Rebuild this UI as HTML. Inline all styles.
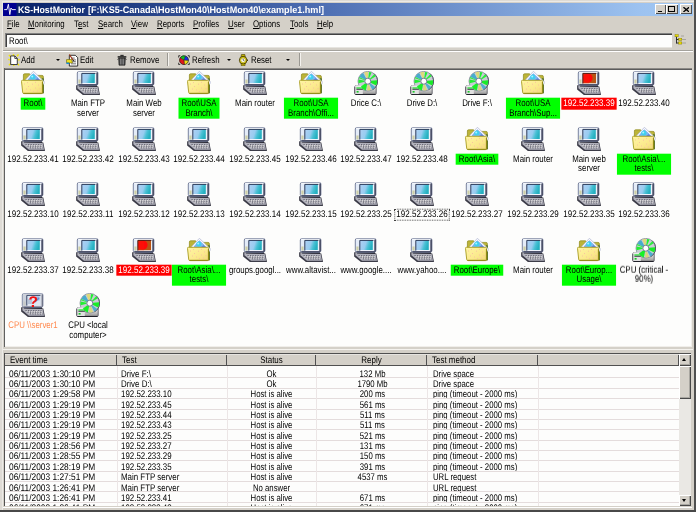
<!DOCTYPE html>
<html><head><meta charset="utf-8"><title>KS-HostMonitor</title>
<style>
html,body{margin:0;padding:0;}
body{width:696px;height:512px;overflow:hidden;background:#d4d0c8;font-family:"Liberation Sans",sans-serif;font-size:9.6px;color:#000;position:relative;text-rendering:geometricPrecision;}
.abs{position:absolute;}
#root{position:absolute;left:0;top:0;width:696px;height:512px;overflow:hidden;will-change:transform;}
#frameR{left:694px;top:0;width:2px;height:512px;background:#505050;}
#frameB{left:0;top:509.5px;width:696px;height:3px;background:#484848;}
#title{left:3px;top:3px;width:690px;height:13px;background:linear-gradient(90deg,#0a246a 0%,#0a246a 3%,#4f70b4 47%,#9cc2f0 92%,#a2c8f2 100%);}
.ttext{left:17.8px;top:4.7px;color:#fff;font-weight:bold;font-size:9.5px;line-height:12px;white-space:pre;transform:scaleX(0.944);transform-origin:0 50%;}
.wb{position:absolute;top:4.3px;width:11px;height:10.2px;background:#d4d0c8;box-shadow:inset 1px 1px 0 #fff,inset -1px -1px 0 #505050;}
.mi{position:absolute;top:19.3px;line-height:11px;white-space:nowrap;transform:scaleX(0.82);transform-origin:0 50%;}
#path{left:5px;top:33px;width:667px;height:14px;background:#fdfdfc;box-shadow:inset 1px 1px 0 #808080,inset 2px 2px 0 #404040,0 1px 0 #e6e4df;}
#ptext{left:9px;top:36px;line-height:11px;transform:scaleX(0.82);transform-origin:0 50%;}
#tbtn{left:673px;top:33px;width:18px;height:15px;background:#d4d0c8;}
#tbline1{left:3px;top:49.5px;width:690px;height:1px;background:#a4a29c;}
#tbline2{left:3px;top:50.5px;width:690px;height:1px;background:#fff;}
.tt{position:absolute;top:55px;line-height:11px;white-space:nowrap;transform:scaleX(0.82);transform-origin:0 50%;}
.sep{position:absolute;top:53px;width:1px;height:13px;background:#9a9892;box-shadow:1px 0 0 #f4f2ee;}
.dd{position:absolute;top:59.3px;width:0;height:0;border-left:2.1px solid transparent;border-right:2.1px solid transparent;border-top:2.6px solid #000;}
#icons{left:4px;top:68px;width:688px;height:278.5px;background:#fdfdfc;box-shadow:inset 1px 0 0 #606060,inset 0 1px 0 #8c8a86,inset 0 2px 0 #5c5c5c,inset -1px -1px 0 #f0eeea;}
.ic{position:absolute;}
.lw{position:absolute;width:100px;text-align:center;line-height:9.6px;white-space:nowrap;transform:translateY(-0.3px) scaleX(0.82);}
.lw.ip{transform:translateY(-0.3px) scaleX(0.838);}
.lw.ip .lb{padding-left:2px;padding-right:2px;}
.lb{display:inline-block;padding:1.25px 3.4px 0.75px 3.4px;}
.lb.e{min-width:58.5px;}
.lb.g{background:#00ff00;}
.lb.r{background:#ff0000;color:#fff;}
.lb.o{color:#ff8a50;}
.lb.f{outline:1px dotted #404040;outline-offset:-1px;padding-left:2.4px;padding-right:2.4px;}
#split{left:3px;top:348.5px;width:690px;height:1px;background:#f4f2ee;}
#log{left:4px;top:353px;width:687px;height:154px;background:#fdfdfc;box-shadow:inset 1px 1px 0 #505050;}
.hd{position:absolute;top:354px;height:12.4px;background:#d4d0c8;box-shadow:inset 0 1px 0 #e6e4e0,inset -1px -1px 0 #505050;line-height:12px;}
.hd span{position:absolute;top:1.2px;white-space:nowrap;transform:scaleX(0.83);transform-origin:0 50%;}
.hd span.ctr{transform-origin:50% 50%;}
.lr{position:absolute;left:5px;width:674px;height:10.35px;line-height:10.35px;white-space:nowrap;border-bottom:0;}
.lr::after{content:"";position:absolute;left:0;right:0;bottom:0;height:1px;background:#e4dcdc;}
.lr span{position:absolute;top:1.5px;transform:scaleX(0.81);transform-origin:0 50%;}
.lr .c1{left:3.7px;transform:scaleX(0.87);} .lr .c2{left:116px;transform:scaleX(0.825);} .lr .c3{left:222px;width:89px;text-align:center;transform-origin:50% 50%;} .lr .c4{left:312px;width:111px;text-align:center;transform-origin:50% 50%;} .c5{left:428px;}
.vl{position:absolute;top:366px;width:1px;height:141px;background:#ece6e6;}
#sb{left:679px;top:354px;width:12px;height:152px;background:#eae8e4;}
.sbb{position:absolute;left:679px;width:12px;background:#d4d0c8;box-shadow:inset 1px 1px 0 #fff,inset -1px -1px 0 #484848,inset -2px -2px 0 #a8a6a0;}
.arr{position:absolute;width:0;height:0;border-left:2.6px solid transparent;border-right:2.6px solid transparent;}
</style></head><body>

<svg width="0" height="0" style="position:absolute">
<defs>
<linearGradient id="gScr" x1="0" y1="0" x2="1" y2="0.25">
 <stop offset="0" stop-color="#b0d0f4"/><stop offset="0.5" stop-color="#98ccf0"/><stop offset="0.75" stop-color="#48c0d4"/><stop offset="1" stop-color="#26b0c0"/>
</linearGradient>
<linearGradient id="gRed" x1="0" y1="0" x2="1" y2="0.4">
 <stop offset="0" stop-color="#ff1808"/><stop offset="0.5" stop-color="#f02808"/><stop offset="1" stop-color="#b86028"/>
</linearGradient>
<linearGradient id="gFold" x1="0" y1="0" x2="1" y2="1">
 <stop offset="0" stop-color="#fff6a4"/><stop offset="0.6" stop-color="#fbe98c"/><stop offset="1" stop-color="#f0d878"/>
</linearGradient>
<linearGradient id="gDrv" x1="0" y1="0" x2="0" y2="1">
 <stop offset="0" stop-color="#f0f0f0"/><stop offset="0.5" stop-color="#c8c8c8"/><stop offset="1" stop-color="#909090"/>
</linearGradient>
<symbol id="pc" viewBox="0 0 24 24">
 <!-- base shadow & unit -->
 <path d="M0.1 14.2 L22.3 15.4 L24 23.9 L6.9 23.9 L0.1 18.6 Z" fill="#3c3c48"/>
 <path d="M1.4 15 L21.6 15.8 L23 22.7 L8 22.7 L1.4 17.2 Z" fill="#b2b2bc"/>
 <path d="M4.5 17.5 L20.6 17.8 M6.6 19.2 L21.2 19.4 M8.8 20.9 L21.8 21.1" stroke="#5e5e6a" stroke-width="1" stroke-dasharray="1.3 1.2"/>
 <path d="M5.4 18.3 L20.8 18.6 M7.6 20 L21.4 20.2" stroke="#f0eee8" stroke-width="0.8" stroke-dasharray="1.2 1.2"/>
 <!-- neck -->
 <path d="M3.6 13.6 L20.6 13.6 L21.4 16 L2.8 15.6Z" fill="#2c2c38"/>
 <!-- monitor casing -->
 <path d="M3 0.5 L20.4 0.5 Q21.9 0.5 21.9 2 L21.9 12.6 Q21.9 14.2 20.4 14.2 L3 14.2 Q1.3 14.2 1.3 12.6 L1.3 2 Q1.3 0.5 3 0.5Z" fill="#e4ecf8" stroke="#5a6486" stroke-width="0.8"/>
 <path d="M2 1.2 L20.8 1.2" stroke="#ffffff" stroke-width="0.9"/>
 <path d="M21.1 1.6 L21.1 13.6" stroke="#3c4058" stroke-width="1.5"/><path d="M2.4 13.5 L21 13.5" stroke="#50546c" stroke-width="1.1"/>
 <path d="M2.4 8.5 L2.4 12.5 L4.6 12.5 L4.6 8.5Z" fill="#c8c890" opacity="0.8"/>

 <rect x="5.8" y="2.2" width="13.8" height="10.6" fill="#f4f8ff"/>
 <rect x="6" y="2.4" width="12.8" height="9.6" fill="url(#gScr)"/>
 <path d="M5.8 12.6 L5.8 2.4 L19.4 2.4" stroke="#283858" stroke-width="1" fill="none"/>
</symbol><symbol id="pcred" viewBox="0 0 24 24">
 <!-- base shadow & unit -->
 <path d="M0.1 14.2 L22.3 15.4 L24 23.9 L6.9 23.9 L0.1 18.6 Z" fill="#3c3c48"/>
 <path d="M1.4 15 L21.6 15.8 L23 22.7 L8 22.7 L1.4 17.2 Z" fill="#b2b2bc"/>
 <path d="M4.5 17.5 L20.6 17.8 M6.6 19.2 L21.2 19.4 M8.8 20.9 L21.8 21.1" stroke="#5e5e6a" stroke-width="1" stroke-dasharray="1.3 1.2"/>
 <path d="M5.4 18.3 L20.8 18.6 M7.6 20 L21.4 20.2" stroke="#f0eee8" stroke-width="0.8" stroke-dasharray="1.2 1.2"/>
 <!-- neck -->
 <path d="M3.6 13.6 L20.6 13.6 L21.4 16 L2.8 15.6Z" fill="#2c2c38"/>
 <!-- monitor casing -->
 <path d="M3 0.5 L20.4 0.5 Q21.9 0.5 21.9 2 L21.9 12.6 Q21.9 14.2 20.4 14.2 L3 14.2 Q1.3 14.2 1.3 12.6 L1.3 2 Q1.3 0.5 3 0.5Z" fill="#e4ecf8" stroke="#5a6486" stroke-width="0.8"/>
 <path d="M2 1.2 L20.8 1.2" stroke="#ffffff" stroke-width="0.9"/>
 <path d="M21.1 1.6 L21.1 13.6" stroke="#3c4058" stroke-width="1.5"/><path d="M2.4 13.5 L21 13.5" stroke="#50546c" stroke-width="1.1"/>
 <path d="M2.4 8.5 L2.4 12.5 L4.6 12.5 L4.6 8.5Z" fill="#c8c890" opacity="0.8"/>

 <rect x="5.8" y="2.2" width="13.8" height="10.6" fill="#f4ece8"/>
 <rect x="6" y="2.4" width="13" height="9.8" fill="#b85414"/><ellipse cx="10.8" cy="7" rx="4.8" ry="4.5" fill="#ff0808"/><rect x="6" y="2.4" width="6" height="9.8" fill="#fa1408" opacity="0.6"/>
 <path d="M5.8 12.6 L5.8 2.4 L19.4 2.4" stroke="#501810" stroke-width="1" fill="none"/>
</symbol><symbol id="pcq" viewBox="0 0 24 24">
 <!-- base shadow & unit -->
 <path d="M0.1 14.2 L22.3 15.4 L24 23.9 L6.9 23.9 L0.1 18.6 Z" fill="#3c3c48"/>
 <path d="M1.4 15 L21.6 15.8 L23 22.7 L8 22.7 L1.4 17.2 Z" fill="#b2b2bc"/>
 <path d="M4.5 17.5 L20.6 17.8 M6.6 19.2 L21.2 19.4 M8.8 20.9 L21.8 21.1" stroke="#5e5e6a" stroke-width="1" stroke-dasharray="1.3 1.2"/>
 <path d="M5.4 18.3 L20.8 18.6 M7.6 20 L21.4 20.2" stroke="#f0eee8" stroke-width="0.8" stroke-dasharray="1.2 1.2"/>
 <!-- neck -->
 <path d="M3.6 13.6 L20.6 13.6 L21.4 16 L2.8 15.6Z" fill="#2c2c38"/>
 <!-- monitor casing -->
 <path d="M3 0.5 L20.4 0.5 Q21.9 0.5 21.9 2 L21.9 12.6 Q21.9 14.2 20.4 14.2 L3 14.2 Q1.3 14.2 1.3 12.6 L1.3 2 Q1.3 0.5 3 0.5Z" fill="#e4ecf8" stroke="#5a6486" stroke-width="0.8"/>
 <path d="M2 1.2 L20.8 1.2" stroke="#ffffff" stroke-width="0.9"/>
 <path d="M21.1 1.6 L21.1 13.6" stroke="#3c4058" stroke-width="1.5"/><path d="M2.4 13.5 L21 13.5" stroke="#50546c" stroke-width="1.1"/>
 <path d="M2.4 8.5 L2.4 12.5 L4.6 12.5 L4.6 8.5Z" fill="#c8c890" opacity="0.8"/>

 <rect x="1.8" y="1" width="19.6" height="12.8" fill="#c4c8d2" opacity="0.75"/>
 <rect x="5.8" y="2.2" width="13.8" height="10.6" fill="#dfe6f2"/>
 <path d="M5.8 12.6 L5.8 2.4 L19.4 2.4" stroke="#384868" stroke-width="1" fill="none"/>
 <rect x="7" y="6" width="4" height="5" fill="#b8c4d8"/><rect x="14.6" y="3.4" width="4" height="4" fill="#9cb4dc"/><path d="M14 9 L18 5" stroke="#6090d0" stroke-width="1.2"/>
 <text x="12.2" y="13.6" font-family="Liberation Sans" font-weight="bold" font-size="15.5" fill="#f01010" text-anchor="middle">?</text>
</symbol>
<symbol id="fold" viewBox="0 0 24 24">
 <!-- back of folder -->
 <path d="M2.4 4 Q2.4 2.8 3.6 2.8 L8.6 2.8 L10 4.4 L21 4.4 Q22.4 4.4 22.4 5.8 L22.4 22 L2.4 22Z" fill="#bcb438" stroke="#8c8818" stroke-width="0.7"/>
 <path d="M21.2 7 L22.8 7.4 L22.8 22.2 L21.2 22.6Z" fill="#4c6c28"/>
 <!-- photo -->
 <path d="M12.4 0.3 L24 11.4 L18.5 17.5 L4.4 8.8Z" fill="#f8f8ff" stroke="#a0a8c8" stroke-width="0.6"/>
 <path d="M12.3 2.6 L21.6 11.3 L17.5 15.6 L7 8.4Z" fill="#5c7ce0"/>
 <path d="M12.3 2.6 L17 7 L11 11.2 L7 8.4Z" fill="#78b8f0"/>
 <circle cx="11.8" cy="6" r="2.5" fill="#40d0f0"/>
 <circle cx="11.2" cy="5.4" r="1" fill="#a8f0ff"/>
 <!-- front of folder -->
 <path d="M1.4 9.3 L20.4 9.3 Q21.6 9.3 21.6 10.5 L21.6 21.4 Q21.6 22.6 20.4 22.6 L3 22.6 Q1.8 22.6 1.7 21.4 L0.5 10.4 Q0.4 9.3 1.4 9.3Z" fill="url(#gFold)" stroke="#a89c20" stroke-width="0.9"/>
 <path d="M2.6 22.3 L20.6 22.3 Q21.4 22.3 21.4 21.4 L21.4 11" stroke="#8c8410" stroke-width="0.9" fill="none"/>
 <path d="M3 13 h1 M7 15.5 h1 M11 13.2 h1 M14 17 h1 M9 19 h1 M17 14 h1 M5 18 h1 M16 20 h1 M12 20.6 h1 M18.6 17.6 h1 M6 11.6 h1 M14 11.4 h1" stroke="#f8c0a0" stroke-width="0.9"/>
</symbol>

<symbol id="cd" viewBox="0 0 24 24">
 <path d="M2 14.8 L21 14.8 Q22.2 14.8 22.2 16 L22.2 22.4 Q22.2 23.6 21 23.6 L2 23.6 Q0.7 23.6 0.7 22.4 L0.7 16 Q0.7 14.8 2 14.8Z" fill="url(#gDrv)" stroke="#50505a" stroke-width="0.8"/>
 <path d="M1.6 23.5 L21.4 23.5" stroke="#202028" stroke-width="1.2"/>
 <circle cx="13.8" cy="10.2" r="9.8" fill="#c8ccd4" stroke="#808898" stroke-width="0.8"/>
 <path d="M20.10 2.69 A9.8 9.8 0 0 1 18.70 18.69" fill="none" stroke="#484c5c" stroke-width="0.9"/>
 <path d="M10.97 8.70 L5.50 5.79 A9.4 9.4 0 0 1 9.10 2.06 L12.20 7.43Z" fill="#38a8cc" opacity="0.9"/><path d="M12.60 7.23 L10.28 1.48 A9.4 9.4 0 0 1 14.13 0.81 L13.91 7.00Z" fill="#e0dc70" opacity="0.9"/><path d="M14.25 7.03 L15.11 0.89 A9.4 9.4 0 0 1 17.62 1.61 L15.10 7.28Z" fill="#20f030" opacity="1"/><path d="M15.94 7.82 L20.09 3.21 A9.4 9.4 0 0 1 21.77 5.22 L16.51 8.50Z" fill="#28f038" opacity="1"/><path d="M16.98 9.87 L23.15 9.22 A9.4 9.4 0 0 1 22.10 14.61 L16.63 11.70Z" fill="#18ec28" opacity="1"/><path d="M16.32 12.17 L21.21 15.99 A9.4 9.4 0 0 1 18.21 18.50 L15.30 13.03Z" fill="#38a8cc" opacity="0.85"/><path d="M14.89 13.21 L17.01 19.03 A9.4 9.4 0 0 1 13.14 19.58 L13.58 13.39Z" fill="#dcd870" opacity="0.9"/><path d="M13.13 13.33 L11.85 19.39 A9.4 9.4 0 0 1 6.39 15.99 L11.28 12.17Z" fill="#18f028" opacity="1"/><path d="M10.67 10.87 L4.61 12.15 A9.4 9.4 0 0 1 4.54 8.57 L10.65 9.64Z" fill="#20f030" opacity="1"/><path d="M10.76 9.21 L4.86 7.30 A9.4 9.4 0 0 1 5.35 6.08 L10.92 8.80Z" fill="#28f038" opacity="1"/>
 <circle cx="13.8" cy="10.2" r="3" fill="#ffffff" stroke="#687088" stroke-width="0.9"/>
 <path d="M2 14.8 L6.6 14.8 L8.8 19 L8.8 23 L1.2 23 L0.9 16 Q0.9 14.8 2 14.8Z" fill="#e0e0e0"/>
 <path d="M2 15 L6.6 15" stroke="#fafafa" stroke-width="0.8"/>
 <path d="M2.4 17 L7.8 17" stroke="#18e828" stroke-width="1.2"/>
 <path d="M2.4 18.3 L8.8 18.3" stroke="#404048" stroke-width="1"/>
 <rect x="2.6" y="20" width="2" height="1.6" fill="#18c828"/>
 <path d="M0.8 16 L0.8 22.4" stroke="#50505a" stroke-width="0.8"/>
</symbol>

<!-- toolbar icons -->
<symbol id="tAdd" viewBox="0 0 14 14">
 <path d="M1 1 L3.2 3.2 M6 0.2 L6.2 2 M11.8 0.6 L10 2.6 M13 6.5 L11 6.6 M12.4 12.6 L10.6 11 M1 12.6 L2.8 11 M0.2 6 L2 6.4 M6.4 13.8 L6.4 12.4" stroke="#f4e800" stroke-width="1.6"/>
 <path d="M3 2.2 L7.6 2.2 L10.4 5 L10.4 11.8 L3 11.8Z" fill="#ffffff" stroke="#101010" stroke-width="0.9"/>
 <path d="M7.6 2.2 L7.6 5 L10.4 5" fill="none" stroke="#101010" stroke-width="0.8"/>
</symbol>
<symbol id="tEdit" viewBox="0 0 14 14">
 <path d="M3.6 1.4 L10 1.4 L12.6 4 L12.6 13 L3.6 13Z" fill="#ffffff" stroke="#101010" stroke-width="0.9"/>
 <path d="M5.4 4.4 h4 M5.4 6.4 h5.4 M5.4 8.4 h5.4 M5.4 10.6 h5.4" stroke="#404040" stroke-width="0.8"/>
 <path d="M0.6 6 L6 6 L7 9.6 L0.6 9.6Z" fill="#f0e020" stroke="#605800" stroke-width="0.6"/>
 <path d="M0.4 9.2 h3 v1.6 h-3z" fill="#1890d8"/>
 <path d="M3.6 0.6 L7.6 6.4" stroke="#a03010" stroke-width="1.2"/>
 <path d="M7.6 6.4 L8.6 8" stroke="#101010" stroke-width="1"/>
</symbol>
<symbol id="tRem" viewBox="0 0 12 14">
 <path d="M4 0.8 h4 v1.6 h-4z" fill="#303030"/>
 <path d="M0.8 2.4 h10.4 v1.8 h-10.4z" fill="#202020"/>
 <path d="M2 4.6 h8 l-0.4 8.6 h-7.2z" fill="#484848" stroke="#101010" stroke-width="0.7"/>
 <path d="M4.2 5.4 v7 M6 5.4 v7 M7.8 5.4 v7" stroke="#a0a0a0" stroke-width="0.7"/>
 <path d="M0.4 6.4 L1.8 5.6 M11.6 6.4 L10.2 5.6" stroke="#202020" stroke-width="0.8"/>
</symbol>
<symbol id="tRef" viewBox="0 0 14 12">
 <path d="M2.6 0.8 L0.8 0.8 L0.8 3 M0.8 9 L0.8 11.2 L2.6 11.2 M11.4 0.8 L13.2 0.8 L13.2 3 M13.2 9 L13.2 11.2 L11.4 11.2" fill="none" stroke="#101010" stroke-width="0.9"/>
 <path d="M7 6 L2.6 3 A5.2 5.2 0 0 1 8.6 1.05Z" fill="#10c020"/>
 <path d="M7 6 L8.6 1.05 A5.2 5.2 0 0 1 12.2 6.4Z" fill="#1830e0"/>
 <path d="M7 6 L12.2 6.4 A5.2 5.2 0 0 1 7.6 11.2Z" fill="#f0e010"/>
 <path d="M7 6 L7.6 11.2 A5.2 5.2 0 0 1 2.6 3Z" fill="#e01818"/>
 <path d="M7 6 L2.6 3 M7 6 L8.6 1.05 M7 6 L12.2 6.4 M7 6 L7.6 11.2" stroke="#181818" stroke-width="0.6"/><circle cx="7" cy="6" r="5.2" fill="none" stroke="#202020" stroke-width="0.8"/>
</symbol>
<symbol id="tRes" viewBox="0 0 12 14">
 <path d="M4 0.4 h4 l0.4 3 h-4.8z M3.6 10.6 h4.8 l-0.4 3 h-4z" fill="#c8b800" stroke="#403800" stroke-width="0.7"/>
 <circle cx="6" cy="7" r="4.4" fill="#f0e010" stroke="#282000" stroke-width="0.9"/>
 <circle cx="6" cy="7" r="2.7" fill="#fffff0" stroke="#807000" stroke-width="0.5"/>
 <path d="M6 5.2 L6 7 L7.4 7.6" stroke="#101010" stroke-width="0.7" fill="none"/>
 <path d="M10.4 6.2 h1.2 v1.6 h-1.2z" fill="#403800"/>
</symbol>
</defs></svg>

<div id="root">
<div id="title" class="abs"></div>
<svg class="abs" style="left:3px;top:3px" width="14" height="13" viewBox="0 0 14 13"><rect x="0" y="0" width="13.5" height="13" fill="#000090"/><path d="M1.2 6.6 L4 6.6 L5.4 1.2 L6.8 11.6 L8 5 L9 6.6 L12.8 6.6" fill="none" stroke="#fff" stroke-width="0.9"/></svg>
<div class="abs ttext" style="left:17.6px;transform:scaleX(0.925)">KS-HostMonitor</div><div class="abs ttext" style="left:88px;transform:scaleX(0.955)">[F:\KS5-Canada\HostMon40\HostMon40\example1.hml]</div>
<div class="wb" style="left:654.5px"><div class="abs" style="left:3px;top:6.5px;width:4.7px;height:1.6px;background:#000"></div></div>
<div class="wb" style="left:666px;width:11.6px"><div class="abs" style="left:2.3px;top:1.8px;width:6.8px;height:6.1px;border:1px solid #000;border-top-width:1.8px;box-sizing:border-box"></div></div>
<div class="wb" style="left:679.8px;width:11.8px"><svg class="abs" style="left:2.8px;top:2.5px" width="6.6" height="5.2" viewBox="0 0 6.6 5.2"><path d="M0.4 0.2 L6.2 5 M6.2 0.2 L0.4 5" stroke="#000" stroke-width="1.35"/></svg></div>
<span class="mi" style="left:6.9px"><u>F</u>ile</span><span class="mi" style="left:28px"><u>M</u>onitoring</span><span class="mi" style="left:74px">T<u>e</u>st</span><span class="mi" style="left:98px"><u>S</u>earch</span><span class="mi" style="left:131px"><u>V</u>iew</span><span class="mi" style="left:157px"><u>R</u>eports</span><span class="mi" style="left:193px"><u>P</u>rofiles</span><span class="mi" style="left:228px"><u>U</u>ser</span><span class="mi" style="left:253px"><u>O</u>ptions</span><span class="mi" style="left:290px"><u>T</u>ools</span><span class="mi" style="left:317px"><u>H</u>elp</span>
<div id="path" class="abs"></div><div id="ptext" class="abs">Root\</div>
<div id="tbtn" class="abs"></div>
<svg class="abs" style="left:674px;top:34.4px" width="13" height="12" viewBox="0 0 13 12"><path d="M2.5 2 L2.5 9.5 M2.5 5.5 L5 5.5 M2.5 9 L5 9" stroke="#202020" stroke-width="0.9" fill="none"/><path d="M7.5 2 L10 2 M8.5 5.5 L11.5 5.5 M8.5 9 L11.5 9" stroke="#606060" stroke-width="0.8" stroke-dasharray="1 1"/><rect x="1" y="0.6" width="3.2" height="2.2" fill="#e8e000" stroke="#807000" stroke-width="0.4"/><rect x="4.6" y="4.3" width="3.2" height="2.2" fill="#e8e000" stroke="#807000" stroke-width="0.4"/><rect x="4.6" y="7.9" width="3.2" height="2.2" fill="#e8e000" stroke="#807000" stroke-width="0.4"/></svg>
<div id="tbline1" class="abs"></div><div id="tbline2" class="abs"></div>
<!-- toolbar -->
<svg class="abs" style="left:7.5px;top:53.5px" width="12.5" height="12.5"><use href="#tAdd"/></svg>
<span class="tt" style="left:21px">Add</span><div class="dd" style="left:56px"></div>
<svg class="abs" style="left:66px;top:53.5px" width="13" height="13"><use href="#tEdit"/></svg>
<span class="tt" style="left:80px">Edit</span>
<svg class="abs" style="left:117px;top:53.7px" width="10" height="12"><use href="#tRem"/></svg>
<span class="tt" style="left:130px">Remove</span>
<div class="sep" style="left:167px"></div>
<svg class="abs" style="left:177.5px;top:54.8px" width="12" height="10.3"><use href="#tRef"/></svg>
<span class="tt" style="left:191.5px">Refresh</span><div class="dd" style="left:227px"></div>
<svg class="abs" style="left:238px;top:53.6px" width="10.3" height="12.4"><use href="#tRes"/></svg>
<span class="tt" style="left:250.5px">Reset</span><div class="dd" style="left:286px"></div>
<div class="sep" style="left:298.5px"></div>
<!-- icon pane -->
<div id="icons" class="abs"></div>
<svg class="ic" style="left:20.5px;top:71.0px" width="24" height="24"><use href="#fold"/></svg><div class="lw" style="left:-17.5px;top:98.0px"><span class="lb g">Root\</span></div><svg class="ic" style="left:76.1px;top:71.0px" width="24" height="24"><use href="#pc"/></svg><div class="lw" style="left:38.1px;top:98.0px"><span class="lb">Main FTP<br>server</span></div><svg class="ic" style="left:131.7px;top:71.0px" width="24" height="24"><use href="#pc"/></svg><div class="lw" style="left:93.7px;top:98.0px"><span class="lb">Main Web<br>server</span></div><svg class="ic" style="left:187.3px;top:71.0px" width="24" height="24"><use href="#fold"/></svg><div class="lw" style="left:149.3px;top:98.0px"><span class="lb g">Root\USA<br>Branch\</span></div><svg class="ic" style="left:242.9px;top:71.0px" width="24" height="24"><use href="#pc"/></svg><div class="lw" style="left:204.9px;top:98.0px"><span class="lb">Main router</span></div><svg class="ic" style="left:298.6px;top:71.0px" width="24" height="24"><use href="#fold"/></svg><div class="lw" style="left:260.6px;top:98.0px"><span class="lb g e">Root\USA<br>Branch\Offi...</span></div><svg class="ic" style="left:354.2px;top:71.0px" width="24" height="24"><use href="#cd"/></svg><div class="lw" style="left:316.2px;top:98.0px"><span class="lb">Drice C:\</span></div><svg class="ic" style="left:409.8px;top:71.0px" width="24" height="24"><use href="#cd"/></svg><div class="lw" style="left:371.8px;top:98.0px"><span class="lb">Drive D:\</span></div><svg class="ic" style="left:465.4px;top:71.0px" width="24" height="24"><use href="#cd"/></svg><div class="lw" style="left:427.4px;top:98.0px"><span class="lb">Drive F:\</span></div><svg class="ic" style="left:521.0px;top:71.0px" width="24" height="24"><use href="#fold"/></svg><div class="lw" style="left:483.0px;top:98.0px"><span class="lb g e">Root\USA<br>Branch\Sup...</span></div><svg class="ic" style="left:576.6px;top:71.0px" width="24" height="24"><use href="#pcred"/></svg><div class="lw ip" style="left:538.6px;top:98.0px"><span class="lb r">192.52.233.39</span></div><svg class="ic" style="left:632.2px;top:71.0px" width="24" height="24"><use href="#pc"/></svg><div class="lw ip" style="left:594.2px;top:98.0px"><span class="lb">192.52.233.40</span></div><svg class="ic" style="left:20.5px;top:126.5px" width="24" height="24"><use href="#pc"/></svg><div class="lw ip" style="left:-17.5px;top:153.5px"><span class="lb">192.52.233.41</span></div><svg class="ic" style="left:76.1px;top:126.5px" width="24" height="24"><use href="#pc"/></svg><div class="lw ip" style="left:38.1px;top:153.5px"><span class="lb">192.52.233.42</span></div><svg class="ic" style="left:131.7px;top:126.5px" width="24" height="24"><use href="#pc"/></svg><div class="lw ip" style="left:93.7px;top:153.5px"><span class="lb">192.52.233.43</span></div><svg class="ic" style="left:187.3px;top:126.5px" width="24" height="24"><use href="#pc"/></svg><div class="lw ip" style="left:149.3px;top:153.5px"><span class="lb">192.52.233.44</span></div><svg class="ic" style="left:242.9px;top:126.5px" width="24" height="24"><use href="#pc"/></svg><div class="lw ip" style="left:204.9px;top:153.5px"><span class="lb">192.52.233.45</span></div><svg class="ic" style="left:298.6px;top:126.5px" width="24" height="24"><use href="#pc"/></svg><div class="lw ip" style="left:260.6px;top:153.5px"><span class="lb">192.52.233.46</span></div><svg class="ic" style="left:354.2px;top:126.5px" width="24" height="24"><use href="#pc"/></svg><div class="lw ip" style="left:316.2px;top:153.5px"><span class="lb">192.52.233.47</span></div><svg class="ic" style="left:409.8px;top:126.5px" width="24" height="24"><use href="#pc"/></svg><div class="lw ip" style="left:371.8px;top:153.5px"><span class="lb">192.52.233.48</span></div><svg class="ic" style="left:465.4px;top:126.5px" width="24" height="24"><use href="#fold"/></svg><div class="lw" style="left:427.4px;top:153.5px"><span class="lb g">Root\Asia\</span></div><svg class="ic" style="left:521.0px;top:126.5px" width="24" height="24"><use href="#pc"/></svg><div class="lw" style="left:483.0px;top:153.5px"><span class="lb">Main router</span></div><svg class="ic" style="left:576.6px;top:126.5px" width="24" height="24"><use href="#pc"/></svg><div class="lw" style="left:538.6px;top:153.5px"><span class="lb">Main web<br>server</span></div><svg class="ic" style="left:632.2px;top:126.5px" width="24" height="24"><use href="#fold"/></svg><div class="lw" style="left:594.2px;top:153.5px"><span class="lb g e">Root\Asia\...<br>tests\</span></div><svg class="ic" style="left:20.5px;top:182.0px" width="24" height="24"><use href="#pc"/></svg><div class="lw ip" style="left:-17.5px;top:209.0px"><span class="lb">192.52.233.10</span></div><svg class="ic" style="left:76.1px;top:182.0px" width="24" height="24"><use href="#pc"/></svg><div class="lw ip" style="left:38.1px;top:209.0px"><span class="lb">192.52.233.11</span></div><svg class="ic" style="left:131.7px;top:182.0px" width="24" height="24"><use href="#pc"/></svg><div class="lw ip" style="left:93.7px;top:209.0px"><span class="lb">192.52.233.12</span></div><svg class="ic" style="left:187.3px;top:182.0px" width="24" height="24"><use href="#pc"/></svg><div class="lw ip" style="left:149.3px;top:209.0px"><span class="lb">192.52.233.13</span></div><svg class="ic" style="left:242.9px;top:182.0px" width="24" height="24"><use href="#pc"/></svg><div class="lw ip" style="left:204.9px;top:209.0px"><span class="lb">192.52.233.14</span></div><svg class="ic" style="left:298.6px;top:182.0px" width="24" height="24"><use href="#pc"/></svg><div class="lw ip" style="left:260.6px;top:209.0px"><span class="lb">192.52.233.15</span></div><svg class="ic" style="left:354.2px;top:182.0px" width="24" height="24"><use href="#pc"/></svg><div class="lw ip" style="left:316.2px;top:209.0px"><span class="lb">192.52.233.25</span></div><svg class="ic" style="left:409.8px;top:182.0px" width="24" height="24"><use href="#pc"/></svg><div class="lw ip" style="left:371.8px;top:209.0px"><span class="lb f">192.52.233.26</span></div><svg class="ic" style="left:465.4px;top:182.0px" width="24" height="24"><use href="#pc"/></svg><div class="lw ip" style="left:427.4px;top:209.0px"><span class="lb">192.52.233.27</span></div><svg class="ic" style="left:521.0px;top:182.0px" width="24" height="24"><use href="#pc"/></svg><div class="lw ip" style="left:483.0px;top:209.0px"><span class="lb">192.52.233.29</span></div><svg class="ic" style="left:576.6px;top:182.0px" width="24" height="24"><use href="#pc"/></svg><div class="lw ip" style="left:538.6px;top:209.0px"><span class="lb">192.52.233.35</span></div><svg class="ic" style="left:632.2px;top:182.0px" width="24" height="24"><use href="#pc"/></svg><div class="lw ip" style="left:594.2px;top:209.0px"><span class="lb">192.52.233.36</span></div><svg class="ic" style="left:20.5px;top:237.5px" width="24" height="24"><use href="#pc"/></svg><div class="lw ip" style="left:-17.5px;top:264.5px"><span class="lb">192.52.233.37</span></div><svg class="ic" style="left:76.1px;top:237.5px" width="24" height="24"><use href="#pc"/></svg><div class="lw ip" style="left:38.1px;top:264.5px"><span class="lb">192.52.233.38</span></div><svg class="ic" style="left:131.7px;top:237.5px" width="24" height="24"><use href="#pcred"/></svg><div class="lw ip" style="left:93.7px;top:264.5px"><span class="lb r">192.52.233.39</span></div><svg class="ic" style="left:187.3px;top:237.5px" width="24" height="24"><use href="#fold"/></svg><div class="lw" style="left:149.3px;top:264.5px"><span class="lb g e">Root\Asia\...<br>tests\</span></div><svg class="ic" style="left:242.9px;top:237.5px" width="24" height="24"><use href="#pc"/></svg><div class="lw" style="left:204.9px;top:264.5px"><span class="lb e">groups.googl...</span></div><svg class="ic" style="left:298.6px;top:237.5px" width="24" height="24"><use href="#pc"/></svg><div class="lw" style="left:260.6px;top:264.5px"><span class="lb e">www.altavist...</span></div><svg class="ic" style="left:354.2px;top:237.5px" width="24" height="24"><use href="#pc"/></svg><div class="lw" style="left:316.2px;top:264.5px"><span class="lb e">www.google....</span></div><svg class="ic" style="left:409.8px;top:237.5px" width="24" height="24"><use href="#pc"/></svg><div class="lw" style="left:371.8px;top:264.5px"><span class="lb e">www.yahoo....</span></div><svg class="ic" style="left:465.4px;top:237.5px" width="24" height="24"><use href="#fold"/></svg><div class="lw" style="left:427.4px;top:264.5px"><span class="lb g">Root\Europe\</span></div><svg class="ic" style="left:521.0px;top:237.5px" width="24" height="24"><use href="#pc"/></svg><div class="lw" style="left:483.0px;top:264.5px"><span class="lb">Main router</span></div><svg class="ic" style="left:576.6px;top:237.5px" width="24" height="24"><use href="#fold"/></svg><div class="lw" style="left:538.6px;top:264.5px"><span class="lb g e">Root\Europ...<br>Usage\</span></div><svg class="ic" style="left:632.2px;top:237.5px" width="24" height="24"><use href="#cd"/></svg><div class="lw" style="left:594.2px;top:264.5px"><span class="lb">CPU (critical -<br>90%)</span></div><svg class="ic" style="left:20.5px;top:293.0px" width="24" height="24"><use href="#pcq"/></svg><div class="lw" style="left:-17.5px;top:320.0px"><span class="lb o">CPU \\server1</span></div><svg class="ic" style="left:76.1px;top:293.0px" width="24" height="24"><use href="#cd"/></svg><div class="lw" style="left:38.1px;top:320.0px"><span class="lb">CPU &lt;local<br>computer&gt;</span></div>
<div id="split" class="abs"></div>
<!-- log pane -->
<div id="log" class="abs"></div>
<div class="hd" style="left:5px;width:112px"><span style="left:5px">Event time</span></div>
<div class="hd" style="left:117px;width:110px"><span style="left:5px">Test</span></div>
<div class="hd" style="left:227px;width:89px"><span class="ctr" style="left:0;width:89px;text-align:center">Status</span></div>
<div class="hd" style="left:316px;width:111px"><span class="ctr" style="left:0;width:111px;text-align:center">Reply</span></div>
<div class="hd" style="left:427px;width:111px"><span style="left:5px">Test method</span></div>
<div class="hd" style="left:538px;width:141px"></div>
<div class="abs" style="left:0;top:0;width:696px;height:506px;overflow:hidden"><div class="lr" style="top:368.15px"><span class="c1">06/11/2003 1:30:10 PM</span><span class="c2">Drive F:\</span><span class="c3">Ok</span><span class="c4">132 Mb</span><span class="c5">Drive space</span></div><div class="lr" style="top:378.50px"><span class="c1">06/11/2003 1:30:10 PM</span><span class="c2">Drive D:\</span><span class="c3">Ok</span><span class="c4">1790 Mb</span><span class="c5">Drive space</span></div><div class="lr" style="top:388.85px"><span class="c1">06/11/2003 1:29:58 PM</span><span class="c2">192.52.233.10</span><span class="c3">Host is alive</span><span class="c4">200 ms</span><span class="c5">ping (timeout - 2000 ms)</span></div><div class="lr" style="top:399.20px"><span class="c1">06/11/2003 1:29:19 PM</span><span class="c2">192.52.233.45</span><span class="c3">Host is alive</span><span class="c4">561 ms</span><span class="c5">ping (timeout - 2000 ms)</span></div><div class="lr" style="top:409.55px"><span class="c1">06/11/2003 1:29:19 PM</span><span class="c2">192.52.233.44</span><span class="c3">Host is alive</span><span class="c4">511 ms</span><span class="c5">ping (timeout - 2000 ms)</span></div><div class="lr" style="top:419.90px"><span class="c1">06/11/2003 1:29:19 PM</span><span class="c2">192.52.233.43</span><span class="c3">Host is alive</span><span class="c4">511 ms</span><span class="c5">ping (timeout - 2000 ms)</span></div><div class="lr" style="top:430.25px"><span class="c1">06/11/2003 1:29:19 PM</span><span class="c2">192.52.233.25</span><span class="c3">Host is alive</span><span class="c4">521 ms</span><span class="c5">ping (timeout - 2000 ms)</span></div><div class="lr" style="top:440.60px"><span class="c1">06/11/2003 1:28:56 PM</span><span class="c2">192.52.233.27</span><span class="c3">Host is alive</span><span class="c4">131 ms</span><span class="c5">ping (timeout - 2000 ms)</span></div><div class="lr" style="top:450.95px"><span class="c1">06/11/2003 1:28:55 PM</span><span class="c2">192.52.233.29</span><span class="c3">Host is alive</span><span class="c4">150 ms</span><span class="c5">ping (timeout - 2000 ms)</span></div><div class="lr" style="top:461.30px"><span class="c1">06/11/2003 1:28:19 PM</span><span class="c2">192.52.233.35</span><span class="c3">Host is alive</span><span class="c4">391 ms</span><span class="c5">ping (timeout - 2000 ms)</span></div><div class="lr" style="top:471.65px"><span class="c1">06/11/2003 1:27:51 PM</span><span class="c2">Main FTP server</span><span class="c3">Host is alive</span><span class="c4">4537 ms</span><span class="c5">URL request</span></div><div class="lr" style="top:482.00px"><span class="c1">06/11/2003 1:26:41 PM</span><span class="c2">Main FTP server</span><span class="c3">No answer</span><span class="c4"></span><span class="c5">URL request</span></div><div class="lr" style="top:492.35px"><span class="c1">06/11/2003 1:26:41 PM</span><span class="c2">192.52.233.41</span><span class="c3">Host is alive</span><span class="c4">671 ms</span><span class="c5">ping (timeout - 2000 ms)</span></div><div class="lr" style="top:502.70px"><span class="c1">06/11/2003 1:26:41 PM</span><span class="c2">192.52.233.42</span><span class="c3">Host is alive</span><span class="c4">671 ms</span><span class="c5">ping (timeout - 2000 ms)</span></div></div>
<div class="vl" style="left:116.5px"></div><div class="vl" style="left:226.5px"></div><div class="vl" style="left:315.5px"></div><div class="vl" style="left:426.5px"></div><div class="vl" style="left:537.5px"></div>
<div id="sb" class="abs"></div>
<div class="sbb" style="top:354px;height:11.5px"><div class="arr" style="left:3.2px;top:3.8px;border-bottom:3.2px solid #000"></div></div>
<div class="sbb" style="top:365.5px;height:33px"></div>
<div class="sbb" style="top:494.5px;height:11px"><div class="arr" style="left:3.2px;top:4.2px;border-top:3.2px solid #000"></div></div>
<div class="abs" style="left:3px;top:506px;width:690px;height:3.5px;background:#d4d0c8"></div>
<div class="abs" style="left:3px;top:506.5px;width:689px;height:1px;background:#fff"></div>
<div class="abs" style="left:0;top:0;width:696px;height:2px;background:#dedbd5"></div><div class="abs" style="left:0;top:0;width:2px;height:512px;background:#dedbd5"></div><div class="abs" style="left:2px;top:2px;width:1px;height:508px;background:#eceae6"></div><div class="abs" style="left:2px;top:1px;width:692px;height:1px;background:#eceae6"></div>
<div id="frameR" class="abs"></div><div id="frameB" class="abs"></div>
</div>
</body></html>
